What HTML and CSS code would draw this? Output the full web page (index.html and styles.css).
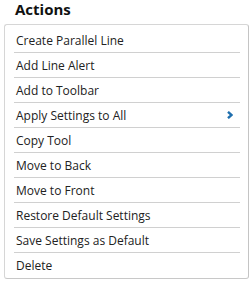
FILE: index.html
```html
<!DOCTYPE html>
<html lang="en">
<head>
    <meta charset="UTF-8">
    <title>Actions</title>
    <link rel="stylesheet" href="styles.css">
</head>
<body>

<div class="actions-panel">
    <h3 class="panel-title">Actions</h3>
    <ul class="menu">
        <li class="menu-item">Create Parallel Line</li>
        <li class="menu-item">Add Line Alert</li>
        <li class="menu-item">Add to Toolbar</li>
        <li class="menu-item has-sub">Apply Settings to All
            <svg class="chevron" width="6" height="8" viewBox="0 0 6 8">
                <path d="M1 0.8 L4.4 4 L1 7.2" fill="none" stroke="#1f6fae" stroke-width="2.4"/>
            </svg>
        </li>
        <li class="menu-item">Copy Tool</li>
        <li class="menu-item">Move to Back</li>
        <li class="menu-item">Move to Front</li>
        <li class="menu-item">Restore Default Settings</li>
        <li class="menu-item">Save Settings as Default</li>
        <li class="menu-item">Delete</li>
    </ul>
</div>

</body>
</html>
```

FILE: styles.css
```css
body {
    margin: 0;
    font-family: "Open Sans", Arial, sans-serif;
    background-color: #ffffff;
    color: #333;
}
.actions-panel {
    padding: 0 4px;
}
.panel-title {
    margin: 0;
    padding: 0 0 0 11px;
    font-size: 15px;
    font-weight: bold;
    line-height: 18px;
    color: #111;
    height: 24px;
    box-sizing: border-box;
}
.menu {
    list-style: none;
    margin: 0;
    padding: 3px 8px 0 9px;
    width: 245px;
    box-sizing: border-box;
    border: 1px solid #d6d6d6;
    border-right-color: #c4c4c4;
    border-bottom-color: #c8c8c8;
    border-radius: 3px;
    background-color: #fff;
}
.menu-item {
    display: flex;
    align-items: center;
    justify-content: space-between;
    height: 24px;
    padding: 0 7px 0 2px;
    font-size: 12px;
    color: #222;
    border-bottom: 1px solid #d0d0d0;
}
.menu-item:last-child {
    height: 25px;
    border-bottom: none;
}
.chevron {
    display: block;
}
```
